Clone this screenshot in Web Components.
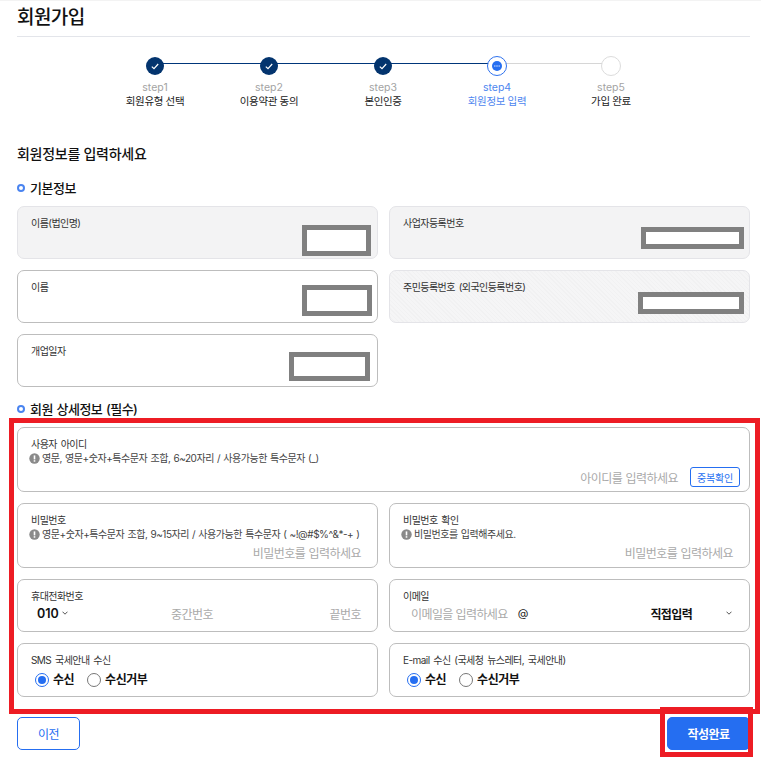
<!DOCTYPE html>
<html lang="ko"><head><meta charset="utf-8"><title>회원가입</title>
<style>
html,body{margin:0;padding:0;background:#fff}
body{font-family:"Inter","Noto Sans CJK KR","Noto Sans",sans-serif;color:#1a1a1a;width:761px;height:760px;overflow:hidden;position:relative}
</style></head><body>
<signup-page></signup-page>
<template id="t-page"><style>
:host{display:block;box-sizing:border-box;padding:0 11px 0 17px;height:760px;position:relative;border-top:1px solid #f3f3f3}
h1{margin:0;height:36px;box-sizing:border-box;border-bottom:1px solid #e3e5ea;font-size:19px;font-weight:500;line-height:33px;letter-spacing:-.6px;color:#111}
h2{margin:0;font-size:14px;font-weight:500;line-height:20px;letter-spacing:-.27px;color:#111}
.intro{margin-top:35px}
.grid{display:grid;grid-template-columns:361px 361px;column-gap:11px;row-gap:11px}
.wide{grid-column:1 / 3}
.s1{margin-top:15px}.s2{margin-top:13px}
.g1{margin-top:9px}.g2{margin-top:9px}
.actions{display:flex;justify-content:space-between;margin-top:20px}
.r{display:flex;justify-content:flex-end;align-items:center;width:100%}
.id{gap:12px;width:calc(100% + 7px);flex:none;margin-top:-2px}
.pw{margin-top:-4px}
.ph{color:#a9a9a9;font-size:12px;letter-spacing:-.55px;word-spacing:.6px;white-space:nowrap}
.dup{box-sizing:border-box;width:50px;height:20px;border:1px solid #256ef1;border-radius:3px;color:#256ef1;font-size:10px;display:flex;align-items:center;justify-content:center;letter-spacing:-.2px}
.phone{display:grid;grid-template-columns:40px 1fr 148px;align-items:center;width:100%;margin-top:-8px}
.v{font-size:12.5px;font-weight:600;color:#111;display:flex;align-items:center;gap:3px;padding-left:6px}
.tr{text-align:right}
.email{display:flex;align-items:center;width:100%;padding-left:8px;box-sizing:border-box;margin-top:-8px}
.email .ph{letter-spacing:-.6px;word-spacing:0}
.at{font-size:11px;margin-left:10px;color:#222}
.sel{margin-left:122px;font-size:12px;font-weight:700;color:#111;letter-spacing:-.55px;white-space:nowrap}
.email svg{margin-left:34px;flex:none}
.radios{display:flex;gap:13px;padding-left:4px;margin-top:-4px}
.red{position:absolute;box-sizing:border-box;border:5px solid #ed1c24;pointer-events:none}
.red.a{left:9px;top:417px;width:751px;height:296px}
.red.b{left:660px;top:706px;width:93px;height:50px}
</style>
<h1>회원가입</h1>
<sign-stepper></sign-stepper>
<h2 class="intro">회원정보를 입력하세요</h2>
<section-title class="s1">기본정보</section-title>
<div class="grid g1">
 <form-card tone="gray" label="이름(법인명)"><mask-box style="right:6px;top:18px;width:69px;height:31px"></mask-box></form-card>
 <form-card tone="gray" label="사업자등록번호"><mask-box style="right:5px;top:20px;width:103px;height:22px"></mask-box></form-card>
 <form-card label="이름"><mask-box style="right:5px;top:14px;width:70px;height:31px"></mask-box></form-card>
 <form-card tone="stripe" label="주민등록번호 (외국인등록번호)"><mask-box style="right:5px;top:21px;width:106px;height:22px"></mask-box></form-card>
 <form-card label="개업일자"><mask-box style="right:7px;top:17px;width:81px;height:29px"></mask-box></form-card>
</div>
<section-title class="s2">회원 상세정보 (필수)</section-title>
<div class="grid g2">
 <form-card class="wide" style="--h:65px" label="사용자 아이디" hint="영문, 영문+숫자+특수문자 조합, 6~20자리 / 사용가능한 특수문자 (_)">
  <div class="r id"><span class="ph">아이디를 입력하세요</span><span class="dup">중복확인</span></div>
 </form-card>
 <form-card style="--h:65px" label="비밀번호" hint="영문+숫자+특수문자 조합, 9~15자리 / 사용가능한 특수문자 ( ~!@#$%^&amp;*-+ )">
  <div class="r pw"><span class="ph">비밀번호를 입력하세요</span></div>
 </form-card>
 <form-card style="--h:65px" label="비밀번호 확인" hint="비밀번호를 입력해주세요.">
  <div class="r pw"><span class="ph">비밀번호를 입력하세요</span></div>
 </form-card>
 <form-card label="휴대전화번호">
  <div class="phone"><span class="v">010<svg width="6" height="4" viewBox="0 0 6 4"><path d="M.5.7 3 3.2 5.5.7" fill="none" stroke="#555" stroke-width="1"/></svg></span><span class="ph tr">중간번호</span><span class="ph tr">끝번호</span></div>
 </form-card>
 <form-card label="이메일">
  <div class="email"><span class="ph">이메일을 입력하세요</span><span class="at">@</span><span class="sel">직접입력</span><svg width="6" height="4" viewBox="0 0 6 4"><path d="M.5.7 3 3.2 5.5.7" fill="none" stroke="#555" stroke-width="1"/></svg></div>
 </form-card>
 <form-card style="--h:54px" label="SMS 국세안내 수신">
  <div class="radios"><radio-opt checked>수신</radio-opt><radio-opt>수신거부</radio-opt></div>
 </form-card>
 <form-card style="--h:54px" label="E-mail 수신 (국세청 뉴스레터, 국세안내)">
  <div class="radios"><radio-opt checked>수신</radio-opt><radio-opt>수신거부</radio-opt></div>
 </form-card>
</div>
<div class="actions"><action-btn>이전</action-btn><action-btn primary>작성완료</action-btn></div>
<div class="red a"></div><div class="red b"></div>
</template>

<template id="t-stepper"><style>
:host{display:flex;justify-content:center;margin-top:19px;padding-right:1px}
</style>
<sign-step n="1" state="done" label="회원유형 선택"></sign-step>
<sign-step n="2" state="done" label="이용약관 동의"></sign-step>
<sign-step n="3" state="done" label="본인인증"></sign-step>
<sign-step n="4" state="cur" label="회원정보 입력"></sign-step>
<sign-step n="5" state="todo" label="가입 완료"></sign-step>
</template>

<template id="t-step"><style>
:host{display:flex;flex-direction:column;align-items:center;width:114px;position:relative}
.line{position:absolute;left:57px;width:114px;top:7px;height:1px;background:#00367a}
.line.off{background:#d6d6d6;height:1px}
.dot{position:relative;box-sizing:border-box;width:20px;height:20px;border-radius:50%;display:flex;align-items:center;justify-content:center;background:#fff}
.done{width:18px;height:18px;margin:1px;background:#03346e}
.cur{border:1px solid #2f72ee}
.cur i{display:flex;align-items:center;justify-content:center;width:10px;height:10px;border-radius:50%;background:#256ef1}
.todo{border:1px solid #dcdcdc}
.st{margin-top:5px;font-size:10.5px;line-height:14px;color:#a3a3a3}
.lb{font-size:10.5px;line-height:14px;letter-spacing:-.35px;color:#222;white-space:nowrap}
:host([state=cur]) .st,:host([state=cur]) .lb{color:#4d86ef}
</style><div class="line"></div><div class="dot"></div><div class="st"></div><div class="lb"></div></template>

<template id="t-title"><style>
:host{display:flex;align-items:center;gap:5px;font-size:13px;font-weight:500;line-height:18px;color:#111;letter-spacing:-.5px;word-spacing:.6px}
i{flex:none;box-sizing:border-box;width:8px;height:8px;border:2px solid #4a84f0;border-radius:50%}
</style><i></i><slot></slot></template>

<template id="t-card"><style>
:host{display:flex;flex-direction:column;box-sizing:border-box;height:var(--h,53px);border:1px solid #bdbdbd;border-radius:7px;padding:9px 16px 0 13px;position:relative;background:#fff}
:host([tone=gray]){background:#f3f3f4;border-color:#e4e4e8}
:host([tone=stripe]){border-color:#e4e4e8;background:repeating-linear-gradient(45deg,#f1f1f2 0 1px,#f5f5f6 1px 3px)}
.l{font-size:10px;line-height:14px;color:#333;letter-spacing:-.55px;word-spacing:1.5px;white-space:nowrap}
.h{display:flex;align-items:center;gap:2px;font-size:10px;line-height:14px;color:#444;margin-left:-2px;white-space:nowrap;letter-spacing:-.45px;word-spacing:.7px}
.h svg{flex:none}
.h[hidden]{display:none}
.b{flex:1;display:flex;align-items:center}
</style><div class="l"></div><div class="h"><svg width="11" height="11" viewBox="0 0 11 11"><circle cx="5.5" cy="5.5" r="5.2" fill="#8a8a8a"/><rect x="4.7" y="2.4" width="1.6" height="4" fill="#fff"/><rect x="4.7" y="7.2" width="1.6" height="1.5" fill="#fff"/></svg><span></span></div><div class="b"><slot></slot></div></template>

<template id="t-mask"><style>
:host{display:block;position:absolute;box-sizing:border-box;border:5px solid #808080;background:#fff}
</style></template>

<template id="t-radio"><style>
:host{display:inline-flex;align-items:center;gap:4px;font-size:12px;font-weight:600;color:#111;line-height:16px;letter-spacing:-.5px}
i{box-sizing:border-box;width:14px;height:14px;border-radius:50%;border:1px solid #777;display:flex;align-items:center;justify-content:center;background:#fff}
:host([checked]) i{border-color:#256ef1}
:host([checked]) i::after{content:"";width:8px;height:8px;border-radius:50%;background:#256ef1}
</style><i></i><slot></slot></template>

<template id="t-btn"><style>
:host{display:flex;align-items:center;justify-content:center;box-sizing:border-box;width:63px;height:33px;border:1px solid #256ef1;border-radius:5px;color:#256ef1;font-size:12px;background:#fff;letter-spacing:-.55px}
:host([primary]){width:83px;background:#256ef1;color:#fff;font-weight:600}
</style><slot></slot></template>

<script>
function def(tag,tpl,init){customElements.define(tag,class extends HTMLElement{
 constructor(){super();this.attachShadow({mode:'open'}).appendChild(document.getElementById(tpl).content.cloneNode(true));}
 connectedCallback(){if(init)init.call(this,this.shadowRoot);}
});}
def('signup-page','t-page');def('sign-stepper','t-stepper');def('section-title','t-title');def('mask-box','t-mask');def('radio-opt','t-radio');def('action-btn','t-btn');
def('sign-step','t-step',function(s){
 const n=this.getAttribute('n'),st=this.getAttribute('state');
 s.querySelector('.st').textContent='step'+n;s.querySelector('.lb').textContent=this.getAttribute('label');
 const d=s.querySelector('.dot');d.classList.add(st);
 if(st==='done')d.innerHTML='<svg width="8" height="7" viewBox="0 0 8 7"><path d="M.8 3.6 3 5.7 7.2 1" fill="none" stroke="#fff" stroke-width="1.2"/></svg>';
 if(st==='cur')d.innerHTML='<i><svg width="6" height="2" viewBox="0 0 6 2"><path d="M0 1h6" stroke="#cfe0ff" stroke-width="1" stroke-dasharray="1.2 .4"/></svg></i>';
 const l=s.querySelector('.line');
 if(n==='5')l.remove();else if(n==='4')l.classList.add('off');
});
def('form-card','t-card',function(s){
 s.querySelector('.l').textContent=this.getAttribute('label');
 const h=this.getAttribute('hint'),e=s.querySelector('.h');
 if(h)e.querySelector('span').textContent=h;else e.hidden=true;
});
</script>
</body></html>
